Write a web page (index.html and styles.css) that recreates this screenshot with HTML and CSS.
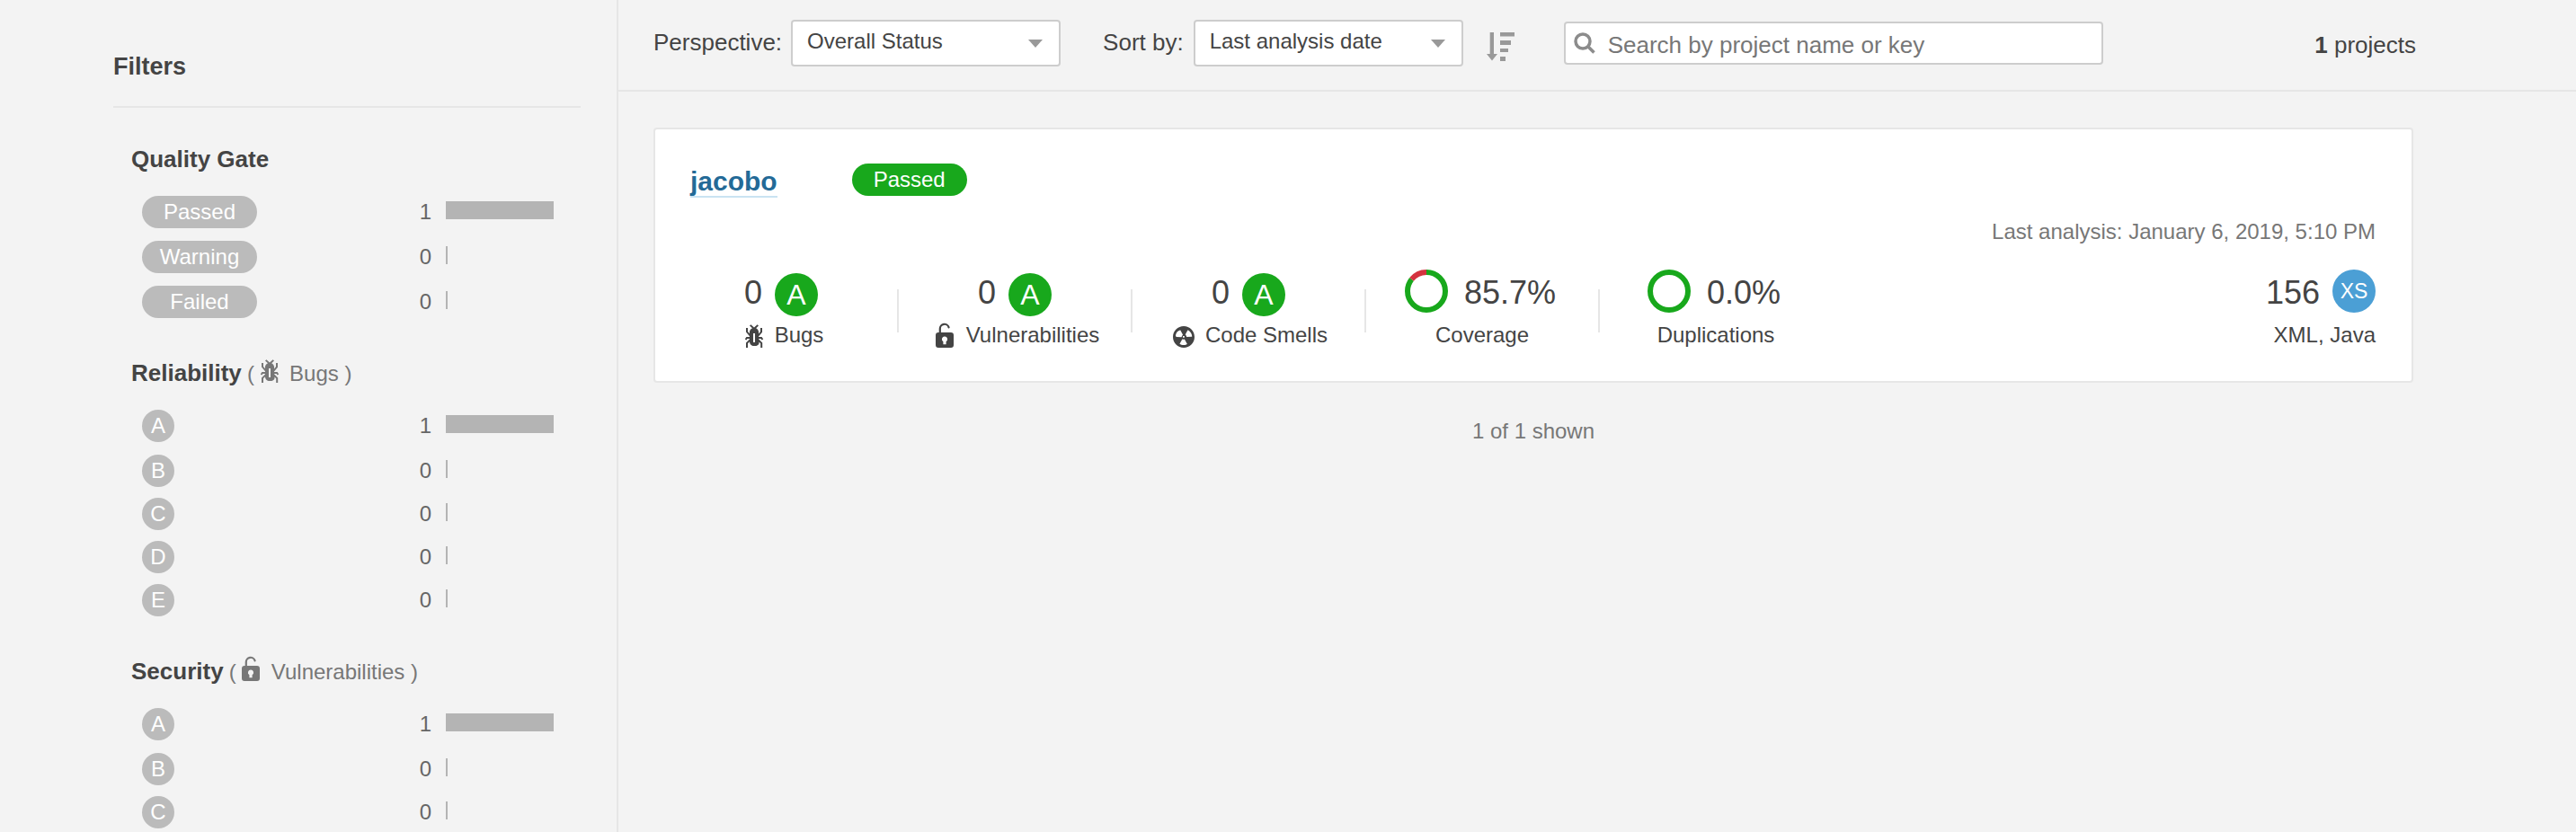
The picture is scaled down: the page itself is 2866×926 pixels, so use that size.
FILE: index.html
```html
<!DOCTYPE html>
<html lang="en">
<head>
    <meta charset="UTF-8">
    <title>Projects</title>
    <link rel="stylesheet" href="styles.css">
</head>
<body>

<svg class="icon-defs" width="0" height="0">
    <symbol id="icon-bug" viewBox="0 0 16 16">
        <path d="M11 9h1.3l.5.8.8-.5-.8-1.3H11v-.3l2-2.3V3h-1v2l-1 1.2V5c-.1-.8-.7-1.5-1.4-1.9L11 1.8l-.7-.7-1.8 1.6-1.8-1.6-.7.7 1.5 1.3C6.7 3.5 6.1 4.2 6 5v1.1L5 5V3H4v2.3l2 2.3v.4H4.2l-.8 1.3.8.5.5-.8H6v.3l-2 1.9V14h1v-2.4l1-1C6 12 7.1 13 8.4 13h.8c.7 0 1.4-.3 1.8-.9.3-.4.3-.9.2-1.4l.9.9V14h1v-2.8l-2-1.9V9zm-2 2H8V6h1v5z"/>
    </symbol>
    <symbol id="icon-lock" viewBox="0 0 16 16">
        <path fill-rule="evenodd" d="M4.500 5.500h7a1.500 1.500 0 0 1 1.500 1.500v5.500a1.500 1.500 0 0 1-1.500 1.500h-7a1.500 1.500 0 0 1-1.500-1.500v-5.500a1.500 1.500 0 0 1 1.500-1.500zM8 7.800a1.500 1.500 0 0 0-.8 2.800v1.500h1.600v-1.500a1.500 1.500 0 0 0-.8-2.800z"/>
        <path fill="none" stroke="currentColor" stroke-width="1.100" stroke-linecap="round" d="M5.400 6v-2.500a2.500 2.500 0 0 1 4.900-.8"/>
    </symbol>
    <symbol id="icon-smell" viewBox="0 0 16 16">
        <path d="M8 2C4.7 2 2 4.7 2 8s2.7 6 6 6 6-2.7 6-6-2.7-6-6-6zm-.5 5.500h.9v.9h-.9v-.9zm-3.800.2c-.1 0-.2-.1-.2-.2 0-.4.1-1.200.6-2S5.700 4.400 6 4.300c.1 0 .2 0 .2.1l1.300 2.300c0 .1 0 .2-.1.2-.1.2-.2.3-.3.5-.1.2-.2.4-.2.5 0 .1-.1.2-.2.2l-2.700-.1zM9.900 12c-.3.2-1.100.5-2 .5-.9 0-1.700-.3-2-.5-.1 0-.1-.2-.1-.3l1.300-2.300c0-.1.1-.1.2-.1.2.1.3.1.5.1s.4 0 .5-.1c.1 0 .2 0 .2.1l1.300 2.300c.2.2.2.3.1.3zm2.500-4.100L9.700 8c-.1 0-.2-.1-.2-.2 0-.2-.1-.4-.2-.5 0-.2-.2-.3-.3-.5-.1 0-.1-.1-.1-.2l1.300-2.300c.1-.1.2-.1.3-.1.3.2 1 .7 1.500 1.500s.6 1.600.6 2c0 .1-.1.2-.2.2z"/>
    </symbol>
</svg>

<div class="layout">

    <aside class="sidebar">
        <h2 class="filters-title">Filters</h2>

        <section class="facet">
            <h3 class="facet-title"><b>Quality Gate</b></h3>
            <div class="facet-row gate-row">
                <span class="pill">Passed</span>
                <span class="count">1</span>
                <span class="bar-box"><span class="bar full"></span></span>
            </div>
            <div class="facet-row gate-row">
                <span class="pill">Warning</span>
                <span class="count">0</span>
                <span class="bar-box"><span class="bar"></span></span>
            </div>
            <div class="facet-row gate-row">
                <span class="pill">Failed</span>
                <span class="count">0</span>
                <span class="bar-box"><span class="bar"></span></span>
            </div>
        </section>

        <section class="facet">
            <h3 class="facet-title"><b>Reliability</b> <span class="facet-sub">(<svg class="icon"><use href="#icon-bug"/></svg>Bugs )</span></h3>
            <div class="facet-row">
                <span class="grade">A</span>
                <span class="count">1</span>
                <span class="bar-box"><span class="bar full"></span></span>
            </div>
            <div class="facet-row">
                <span class="grade">B</span>
                <span class="count">0</span>
                <span class="bar-box"><span class="bar"></span></span>
            </div>
            <div class="facet-row">
                <span class="grade">C</span>
                <span class="count">0</span>
                <span class="bar-box"><span class="bar"></span></span>
            </div>
            <div class="facet-row">
                <span class="grade">D</span>
                <span class="count">0</span>
                <span class="bar-box"><span class="bar"></span></span>
            </div>
            <div class="facet-row">
                <span class="grade">E</span>
                <span class="count">0</span>
                <span class="bar-box"><span class="bar"></span></span>
            </div>
        </section>

        <section class="facet">
            <h3 class="facet-title"><b>Security</b> <span class="facet-sub">(<svg class="icon"><use href="#icon-lock"/></svg>Vulnerabilities )</span></h3>
            <div class="facet-row">
                <span class="grade">A</span>
                <span class="count">1</span>
                <span class="bar-box"><span class="bar full"></span></span>
            </div>
            <div class="facet-row">
                <span class="grade">B</span>
                <span class="count">0</span>
                <span class="bar-box"><span class="bar"></span></span>
            </div>
            <div class="facet-row">
                <span class="grade">C</span>
                <span class="count">0</span>
                <span class="bar-box"><span class="bar"></span></span>
            </div>
        </section>
    </aside>

    <main class="content">

        <header class="toolbar">
            <label class="toolbar-label">Perspective:</label>
            <div class="select">
                <span class="select-value">Overall Status</span>
                <i class="select-arrow"></i>
            </div>
            <label class="toolbar-label sort-label">Sort by:</label>
            <div class="select">
                <span class="select-value">Last analysis date</span>
                <i class="select-arrow"></i>
            </div>
            <svg class="sort-icon" viewBox="0 0 32 32">
                <path d="M3.700 0h4.300v24h4l-6 7.500-6-7.500h3.700z"/>
                <path d="M15 0h16v4.500h-16zM15 9h12v5h-12zM15 18h9v4h-9zM15 27h6v5h-6z"/>
            </svg>
            <div class="search">
                <svg class="search-icon" viewBox="0 0 26 24">
                    <circle cx="10" cy="10" r="8"/>
                    <path d="M15.500 15.500l7 7"/>
                </svg>
                <input class="search-input" type="text" placeholder="Search by project name or key">
            </div>
            <div class="project-count"><b>1</b> projects</div>
        </header>

        <div class="projects">
            <article class="card">
                <div class="card-head">
                    <a class="project-name">jacobo</a>
                    <span class="status">Passed</span>
                </div>
                <div class="card-date">Last analysis: January 6, 2019, 5:10 PM</div>
                <div class="measures">

                    <div class="measure">
                        <div class="measure-top rated">
                            <span class="value">0</span>
                            <span class="rating">A</span>
                        </div>
                        <div class="measure-label"><svg class="icon"><use href="#icon-bug"/></svg>Bugs</div>
                    </div>
                    <div class="measure-sep"></div>

                    <div class="measure">
                        <div class="measure-top rated">
                            <span class="value">0</span>
                            <span class="rating">A</span>
                        </div>
                        <div class="measure-label"><svg class="icon"><use href="#icon-lock"/></svg>Vulnerabilities</div>
                    </div>
                    <div class="measure-sep"></div>

                    <div class="measure">
                        <div class="measure-top rated">
                            <span class="value">0</span>
                            <span class="rating">A</span>
                        </div>
                        <div class="measure-label"><svg class="icon"><use href="#icon-smell"/></svg>Code Smells</div>
                    </div>
                    <div class="measure-sep"></div>

                    <div class="measure">
                        <div class="measure-top with-donut">
                            <svg class="donut" viewBox="0 0 48 48">
                                <circle class="donut-green" cx="24" cy="24" r="21" pathLength="100" stroke-dasharray="85.7 100" transform="rotate(-90 24 24)"/>
                                <circle class="donut-red" cx="24" cy="24" r="21" pathLength="100" stroke-dasharray="14.3 100" stroke-dashoffset="-85.7" transform="rotate(-90 24 24)"/>
                            </svg>
                            <span class="value">85.7%</span>
                        </div>
                        <div class="measure-label">Coverage</div>
                    </div>
                    <div class="measure-sep"></div>

                    <div class="measure">
                        <div class="measure-top with-donut">
                            <svg class="donut" viewBox="0 0 48 48">
                                <circle class="donut-green" cx="24" cy="24" r="21"/>
                            </svg>
                            <span class="value">0.0%</span>
                        </div>
                        <div class="measure-label">Duplications</div>
                    </div>

                    <div class="measure measure-size">
                        <div class="measure-top">
                            <span class="value">156</span>
                            <span class="size-badge">XS</span>
                        </div>
                        <div class="measure-label">XML, Java</div>
                    </div>

                </div>
            </article>
            <div class="shown">1 of 1 shown</div>
        </div>

    </main>
</div>

</body>
</html>
```

FILE: styles.css
```css
html, body {
    margin: 0;
    height: 100%;
    overflow: hidden;
}

body {
    background: #f3f3f3;
    color: #444;
    font-family: "Liberation Sans", Arial, sans-serif;
    font-size: 24px;
}

.icon-defs {
    display: block;
}

.icon {
    width: 32px;
    height: 32px;
    fill: currentColor;
}

.layout {
    display: flex;
    height: 926px;
}

/* left column */

.sidebar {
    box-sizing: border-box;
    width: 688px;
    flex: none;
    padding: 58px 40px 0 126px;
    border-right: 2px solid #e6e6e6;
}

.filters-title {
    margin: 0 0 42px;
    padding-bottom: 28px;
    border-bottom: 2px solid #e6e6e6;
    font-size: 27px;
    line-height: 32px;
}

.facet {
    margin: 0 0 46px 20px;
}

.facet-title {
    margin: 0 0 26px;
    height: 30px;
    font-size: 26px;
    font-weight: normal;
    line-height: 30px;
}

.facet-sub {
    margin-left: -1px;
    color: #777;
    font-size: 24px;
}

.facet-sub .icon {
    margin: -4px 7px -4px 0;
    vertical-align: -2px;
}

.facet-row {
    display: flex;
    align-items: flex-start;
    height: 36px;
    margin: 0 30px 12px 12px;
}

.facet-row:first-of-type,
.gate-row {
    margin-bottom: 14px;
}

.pill {
    width: 128px;
    height: 36px;
    border-radius: 18px;
    background: #bbb;
    color: #fff;
    line-height: 36px;
    text-align: center;
}

.grade {
    width: 36px;
    height: 36px;
    border-radius: 50%;
    background: #bbb;
    color: #fff;
    line-height: 36px;
    text-align: center;
}

.count {
    margin-left: auto;
    color: #666;
    line-height: 36px;
}

.bar-box {
    width: 120px;
    margin-left: 16px;
    padding-top: 6px;
}

.bar {
    display: block;
    width: 2px;
    height: 20px;
    background: #b4b4b4;
}

.bar.full {
    width: 120px;
}

/* toolbar */

.content {
    flex: 1;
}

.toolbar {
    box-sizing: border-box;
    display: flex;
    align-items: flex-start;
    height: 102px;
    padding: 22px 178px 0 39px;
    border-bottom: 2px solid #e6e6e6;
}

.toolbar-label {
    margin-right: 10px;
    font-size: 26px;
    line-height: 50px;
}

.sort-label {
    margin-left: 47px;
    margin-right: 11px;
}

.select {
    box-sizing: border-box;
    display: flex;
    align-items: center;
    justify-content: space-between;
    width: 300px;
    height: 52px;
    padding: 0 18px 0 16px;
    border: 2px solid #cdcdcd;
    border-radius: 4px;
    background: #fff;
    line-height: 44px;
}

.select-value {
    margin-bottom: 4px;
}

.select-arrow {
    width: 0;
    height: 0;
    border-top: 9px solid #999;
    border-left: 8px solid transparent;
    border-right: 8px solid transparent;
}

.sort-icon {
    width: 32px;
    height: 32px;
    margin: 14px 0 0 26px;
    fill: #999;
}

.search {
    box-sizing: border-box;
    display: flex;
    align-items: center;
    width: 600px;
    height: 48px;
    margin: 2px 0 0 54px;
    padding-left: 9px;
    border: 2px solid #cdcdcd;
    border-radius: 4px;
    background: #fff;
}

.search-icon {
    width: 26px;
    height: 24px;
    flex: none;
    fill: none;
    stroke: #8c8c8c;
    stroke-width: 3.500;
}

.search-input {
    flex: 1;
    min-width: 0;
    margin-left: 12px;
    padding: 4px 0 0;
    border: 0;
    outline: 0;
    background: none;
    color: #444;
    font-family: inherit;
    font-size: 26px;
}

.search-input::placeholder {
    color: #777;
    opacity: 1;
}

.project-count {
    margin: 13px 0 0 auto;
    font-size: 26px;
    line-height: 30px;
}

/* project card */

.projects {
    padding: 40px 181px 0 39px;
}

.card {
    box-sizing: border-box;
    height: 284px;
    padding: 38px 40px 0;
    border: 2px solid #e6e6e6;
    border-radius: 4px;
    background: #fff;
}

.card-head {
    display: flex;
    align-items: flex-start;
    height: 36px;
}

.project-name {
    margin: 4px 0 0 -1px;
    border-bottom: 2px solid #cae3f2;
    color: #236a97;
    font-size: 30px;
    font-weight: bold;
    line-height: 32px;
}

.status {
    width: 128px;
    height: 36px;
    margin-left: 83px;
    border-radius: 18px;
    background: #18a81c;
    color: #fff;
    line-height: 36px;
    text-align: center;
}

.card-date {
    margin-top: 25px;
    color: #777;
    line-height: 30px;
    text-align: right;
}

.measures {
    display: flex;
    margin: 27px 0 0 -29px;
}

.measure {
    display: flex;
    flex-direction: column;
    align-items: center;
    width: 258px;
}

.measure-sep {
    width: 2px;
    height: 48px;
    margin-top: 22px;
    background: #e6e6e6;
}

.measure-top {
    display: flex;
    align-items: flex-start;
    gap: 14px;
    height: 52px;
}

.measure-top.rated {
    padding-top: 4px;
    height: 48px;
}

.measure-top.with-donut {
    gap: 18px;
    margin-right: 4px;
}

.value {
    padding-top: 4px;
    font-size: 36px;
    line-height: 44px;
}

.rated .value {
    padding-top: 0;
}

.rating {
    width: 48px;
    height: 48px;
    border-radius: 50%;
    background: #18a81c;
    color: #fff;
    font-size: 32px;
    line-height: 48px;
    text-align: center;
}

.donut {
    width: 48px;
    height: 48px;
    fill: none;
    stroke-width: 6;
}

.donut-green {
    stroke: #18a81c;
}

.donut-red {
    stroke: #d4333f;
}

.measure-label {
    display: flex;
    align-items: center;
    gap: 8px;
    height: 30px;
    margin-top: 6px;
    line-height: 30px;
}

.measure-label .icon {
    margin-top: 4px;
}

.measure-size {
    align-items: flex-end;
    margin-left: auto;
}

.size-badge {
    width: 48px;
    height: 48px;
    border-radius: 50%;
    background: #4b9fd5;
    color: #fff;
    font-size: 23px;
    line-height: 48px;
    text-align: center;
}

.shown {
    margin-top: 39px;
    color: #777;
    line-height: 30px;
    text-align: center;
}
```
